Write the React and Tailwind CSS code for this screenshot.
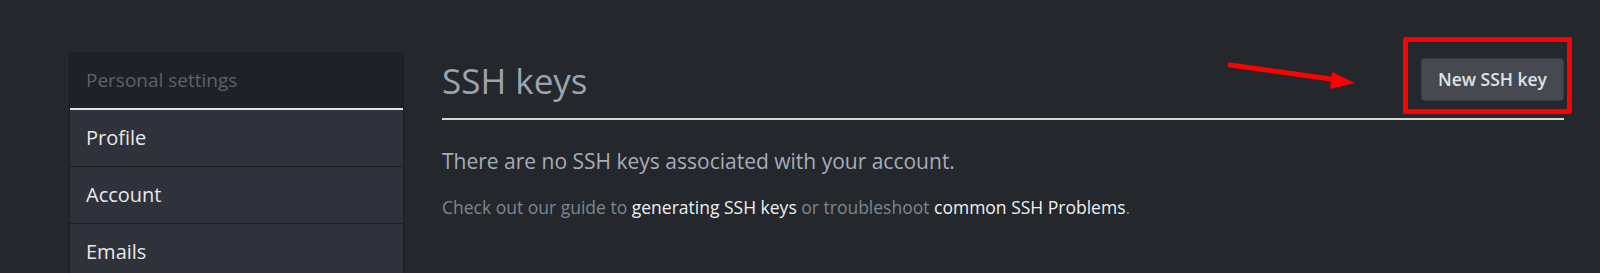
import React from "react";

const sideItems = ["Profile", "Account", "Emails"];

function Sidebar() {
  return (
    <aside className="w-[335px] shrink-0 self-start rounded-[4px] border border-[#1b1d22] overflow-hidden">
      <div className="h-[55px] bg-[#1f2128] px-4 text-[19px] leading-[55px] text-[#5c626a]">
        Personal settings
      </div>
      <div className="h-[2px] bg-[#e4e4e4]" />
      {sideItems.map((item) => (
        <div
          key={item}
          className="h-[57px] border-b border-[#1c1e23] bg-[#2f323b] px-4 text-[20px] leading-[56px] text-[#e8e8ea]"
        >
          {item}
        </div>
      ))}
    </aside>
  );
}

export default function App() {
  return (
    <div
      className="relative h-[273px] w-full overflow-hidden bg-[#24272c]"
      style={{ fontFamily: '"Open Sans", "Noto Sans", sans-serif' }}
    >
      <div className="flex gap-[38px] pl-[69px] pr-[36px] pt-[52px]">
        <Sidebar />
        <main className="flex-1">
          <div className="flex h-[68px] items-start justify-between border-b-2 border-[#d6d6d6]">
            <h2 className="mt-[8px] text-[35px] leading-[42px] text-[#9ba4af]">SSH keys</h2>
            <button className="mt-[6px] h-[43px] rounded-[4px] border border-[#3c3f44] bg-[#46494f] px-[16px] text-[17.5px] font-semibold text-[#dfe2e6]">
              New SSH key
            </button>
          </div>
          <p className="mt-[27px] text-[21px] leading-[28px] text-[#a5aeb9]">
            There are no SSH keys associated with your account.
          </p>
          <p className="mt-[20px] text-[17.5px] leading-[24px] text-[#7e8691]">
            Check out our guide to <a className="text-[#eef0f2]">generating SSH keys</a> or troubleshoot{" "}
            <a className="text-[#eef0f2]">common SSH Problems</a>.
          </p>
        </main>
      </div>

      {/* annotation overlay */}
      <div className="pointer-events-none absolute left-[1403px] top-[37px] h-[77px] w-[169px] rounded-[2px] border-[5px] border-[#ff0000]" />
      <svg
        className="pointer-events-none absolute left-[1220px] top-[55px]"
        width="145"
        height="45"
        viewBox="0 0 145 45"
      >
        <line x1="10" y1="10" x2="118" y2="25" stroke="#ff0000" strokeWidth="5" strokeLinecap="round" />
        <polygon points="112,17 135,28 110,34" fill="#ff0000" />
      </svg>
    </div>
  );
}
